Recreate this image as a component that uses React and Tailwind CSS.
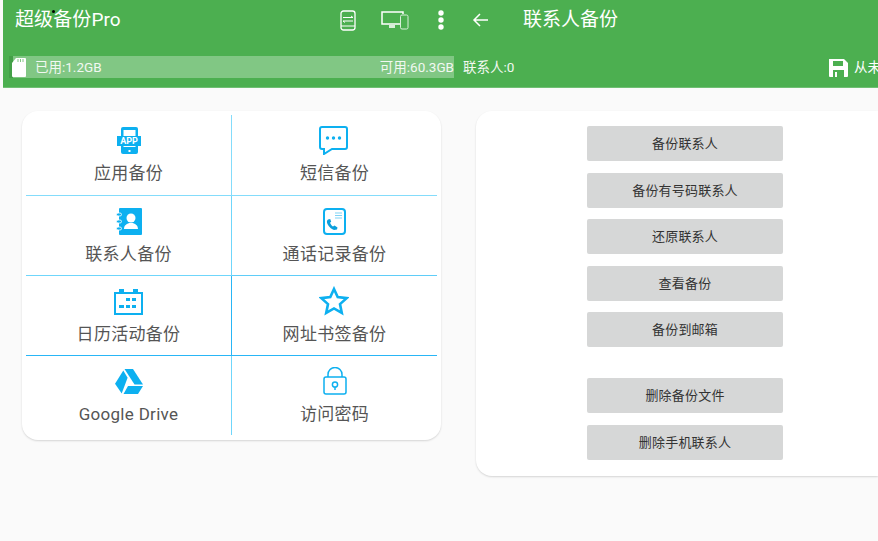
const cjk = `font-['Roboto','Noto_Sans_CJK_SC',sans-serif]`;

function Cell({ icon, label, right, rowClass, lineClass }) {
  return (
    <div className={`flex flex-col items-center ${rowClass} ${right ? "" : "border-r border-[#6fd6fb]"} ${lineClass ? `border-b ${lineClass}` : ""}`}>
      <div className="h-[46px] flex items-center justify-center pt-[4px] shrink-0">{icon}</div>
      <div className="text-[17px] leading-[24px] text-[#555] tracking-[0.3px] whitespace-nowrap">{label}</div>
    </div>
  );
}

const AppIcon = (
  <svg width="24" height="27" viewBox="0 0 24 27">
    <rect x="4" y="0" width="17" height="27" rx="2" fill="#0db0f0" />
    <rect x="6.500" y="3" width="12" height="17" fill="#fff" />
    <rect x="0" y="9" width="24" height="10" fill="#0db0f0" />
    <text x="12" y="17.300" textAnchor="middle" fontSize="9" fontWeight="700" fill="#fff" fontFamily="Roboto">APP</text>
    <rect x="11.500" y="23" width="2" height="2" fill="#fff" />
  </svg>
);
const SmsIcon = (
  <svg width="29" height="29" viewBox="0 0 29 29" className="-ml-[2px]">
    <path d="M3 1h23a2 2 0 0 1 2 2v18a2 2 0 0 1-2 2H13l-8 5v-5H3a2 2 0 0 1-2-2V3a2 2 0 0 1 2-2z" fill="none" stroke="#0db0f0" strokeWidth="2" />
    <circle cx="8.500" cy="12" r="1.700" fill="#0db0f0" />
    <circle cx="14.500" cy="12" r="1.700" fill="#0db0f0" />
    <circle cx="20.500" cy="12" r="1.700" fill="#0db0f0" />
  </svg>
);
const ContactIcon = (
  <svg width="26" height="27" viewBox="0 0 26 27">
    <rect x="3" y="0" width="23" height="27" rx="1" fill="#0db0f0" />
    <circle cx="15" cy="10" r="4.500" fill="#fff" />
    <path d="M8 21c0-4 3-5 5-6h4c2 1 5 2 5 6z" fill="#fff" />
    <g fill="#0db0f0" stroke="#fff" strokeWidth="0.8">
      <rect x="0.500" y="5" width="5" height="3" rx="1.500" />
      <rect x="0.500" y="12" width="5" height="3" rx="1.500" />
      <rect x="0.500" y="19" width="5" height="3" rx="1.500" />
    </g>
  </svg>
);
const CallIcon = (
  <svg width="23" height="27" viewBox="0 0 23 27">
    <rect x="1" y="1" width="21" height="25" rx="3" fill="none" stroke="#0db0f0" strokeWidth="2" />
    <path d="M12 5h7M12 7.500h7M12 10h7" stroke="#7fd3f5" strokeWidth="1" />
    <path d="M5 11.500c-1.500 1-1.500 3 0 5.500 1.500 2.500 4 4.500 6 5l3-.5.500-2-3-2-1.500 1c-1-.5-2.500-2.500-3-3.800l1.200-1-1-2.700z" fill="#0b9fdc" />
  </svg>
);
const CalIcon = (
  <svg width="29" height="27" viewBox="0 0 29 27">
    <path d="M1 5h27v21H1z" fill="none" stroke="#0db0f0" strokeWidth="2" />
    <rect x="5" y="1" width="5" height="5" fill="#0db0f0" />
    <rect x="19" y="1" width="5" height="5" fill="#0db0f0" />
    <g fill="#0db0f0">
      <rect x="12" y="10" width="4" height="3" /><rect x="18" y="10" width="4" height="3" />
      <rect x="5" y="17" width="5" height="3" /><rect x="12" y="17" width="4" height="3" /><rect x="18" y="17" width="4" height="3" />
    </g>
  </svg>
);
const StarIcon = (
  <svg width="30" height="30" viewBox="0 0 30 30" className="-ml-[1px]">
    <path d="M15 3l3.700 8.100 8.900 1-6.600 6 1.800 8.800-7.800-4.500-7.800 4.500 1.800-8.800-6.600-6 8.900-1z" fill="none" stroke="#0db0f0" strokeWidth="2.600" />
  </svg>
);
const DriveIcon = (
  <svg width="28" height="25" viewBox="0 0 28 25">
    <path d="M9.500 0h8.500l10 15.500h-8.500z" fill="#0db0f0" />
    <path d="M8.300 1.500l4.300 7.300L6.700 24.500 0 14.800z" fill="#0db0f0" />
    <path d="M8.500 25l4.500-8h15l-5 8z" fill="#0db0f0" />
  </svg>
);
const LockIcon = (
  <svg width="24" height="28" viewBox="0 0 24 28">
    <rect x="1" y="10" width="22" height="17" rx="2" fill="none" stroke="#0db0f0" strokeWidth="1.500" />
    <path d="M5 10V7.500a7 7 0 0 1 14 0V10" fill="none" stroke="#0db0f0" strokeWidth="1.500" />
    <circle cx="12" cy="17.500" r="2.600" fill="none" stroke="#0db0f0" strokeWidth="1.500" />
    <path d="M12 20v3" stroke="#0db0f0" strokeWidth="1.500" />
  </svg>
);

const Btn = ({ children }) => (
  <div className="w-[196px] h-[35px] shrink-0 bg-[#d6d7d7] rounded-[2px] flex items-center justify-center pt-[1px] text-[13px] text-[#333] tracking-[0.2px]">
    {children}
  </div>
);

export default function App() {
  return (
    <div className={`w-[878px] h-[541px] overflow-hidden bg-[#fafafa] ${cjk} relative`}>
      <div className="ml-[3px] h-[88px] bg-[#4caf50] border-b border-[#6fbf73] text-white relative">
        <span className="absolute left-[49px] top-[10px] w-[3px] h-[3px] rounded-full bg-black" />
        <div className="flex items-center h-[40px]">
          <div className="w-[315px] shrink-0 pl-[12px] text-[19px] leading-[40px] tracking-[0.1px] -mt-[1px]">超级备份Pro</div>
          <svg width="16" height="21" viewBox="0 0 16 21" className="ml-[22px] shrink-0">
            <rect x="1" y="1" width="14" height="19" rx="2.500" fill="none" stroke="#fff" strokeWidth="1.300" />
            <path d="M1 16h14" stroke="#fff" strokeWidth="1" />
            <path d="M3 7.500h10M3 11h10" stroke="#fff" strokeWidth="1" />
            <path d="M11 6l2 1.500M5 12.500L3 11" stroke="#fff" strokeWidth="1" />
          </svg>
          <svg width="28" height="20" viewBox="0 0 28 20" className="ml-[25px] shrink-0">
            <path d="M19 14H1V2h21v2" fill="none" stroke="#fff" strokeWidth="1.500" />
            <rect x="8" y="15" width="6" height="3" fill="#d9efda" />
            <rect x="19.500" y="5" width="7.500" height="14" rx="1.500" fill="none" stroke="#d9efda" strokeWidth="1" />
          </svg>
          <svg width="8" height="20" viewBox="0 0 8 20" className="ml-[28px] shrink-0">
            <circle cx="4" cy="3" r="2.700" fill="#fff" />
            <circle cx="4" cy="10" r="2.700" fill="#fff" />
            <circle cx="4" cy="17" r="2.700" fill="#fff" />
          </svg>
          <svg width="16" height="14" viewBox="0 0 16 14" className="ml-[27px] shrink-0">
            <path d="M16 7H2M8 1L2 7l6 6" fill="none" stroke="#fff" strokeWidth="1.500" />
          </svg>
          <div className="ml-[35px] text-[19px] leading-[40px] -mt-[1px] whitespace-nowrap">联系人备份</div>
        </div>
        <div className="flex h-[22px] mt-[16px] items-center">
          <div className="ml-[6px] w-[4px] h-full shrink-0 bg-[#43a047]" />
          <div className="w-[441px] h-full shrink-0 bg-[#81c784] flex items-center justify-between text-[13.500px] text-[#f1f8f1]">
            <div className="flex items-center">
              <svg width="14" height="19" viewBox="0 0 14 19" className="-ml-[1px]">
                <path d="M4 0h9a1 1 0 0 1 1 1v17a1 1 0 0 1-1 1H1a1 1 0 0 1-1-1V5z" fill="#fff" />
                <path d="M6 1v3M8.500 1v3M11 1v3" stroke="#81c784" strokeWidth="1" />
              </svg>
              <span className="ml-[9px]">已用:1.2GB</span>
            </div>
            <span>可用:60.3GB</span>
          </div>
          <span className="ml-[9px] w-[51px] shrink-0 whitespace-nowrap text-[13.500px] text-[#f1f8f1]">联系人:0</span>
          <svg width="19" height="19" viewBox="0 0 19 19" className="ml-[315px] shrink-0">
            <path d="M0 1h15l4 4v13a1 1 0 0 1-1 1H1a1 1 0 0 1-1-1z" fill="#fff" />
            <rect x="4" y="3" width="10" height="5" fill="#4caf50" />
            <rect x="4" y="12" width="11" height="7" fill="#4caf50" />
            <rect x="6" y="14" width="2" height="5" fill="#fff" />
          </svg>
          <span className="ml-[6px] text-[13.500px] whitespace-nowrap shrink-0">从未备份</span>
        </div>
      </div>

      <div className="flex items-start pt-[23px]">
        <div className="ml-[22px] w-[419px] h-[329px] bg-white rounded-[16px] shadow-[0_1px_2px_rgba(0,0,0,0.15)] px-[4px] pt-[4px]">
          <div className="grid grid-cols-[206px_205px]">
            <Cell icon={AppIcon} label="应用备份" rowClass="h-[81px]" lineClass="border-[#84dcfb]" />
            <Cell icon={SmsIcon} label="短信备份" right rowClass="h-[81px]" lineClass="border-[#84dcfb]" />
            <Cell icon={ContactIcon} label="联系人备份" rowClass="h-20" lineClass="border-[#5fcdf8]" />
            <Cell icon={CallIcon} label="通话记录备份" right rowClass="h-20" lineClass="border-[#5fcdf8]" />
            <Cell icon={CalIcon} label="日历活动备份" rowClass="h-20" lineClass="border-[#29b6f6]" />
            <Cell icon={StarIcon} label="网址书签备份" right rowClass="h-20" lineClass="border-[#29b6f6]" />
            <Cell icon={DriveIcon} label="Google Drive" rowClass="h-[79px]" />
            <Cell icon={LockIcon} label="访问密码" right rowClass="h-[79px]" />
          </div>
        </div>
        <div className="ml-[35px] flex-1 h-[365px] bg-white rounded-l-[16px] shadow-[0_1px_2px_rgba(0,0,0,0.15)] pl-[111px] pt-[15px] flex flex-col gap-[11.500px]">
          <Btn>备份联系人</Btn>
          <Btn>备份有号码联系人</Btn>
          <Btn>还原联系人</Btn>
          <Btn>查看备份</Btn>
          <Btn>备份到邮箱</Btn>
          <div className="h-[8px] shrink-0" />
          <Btn>删除备份文件</Btn>
          <Btn>删除手机联系人</Btn>
        </div>
      </div>
    </div>
  );
}
